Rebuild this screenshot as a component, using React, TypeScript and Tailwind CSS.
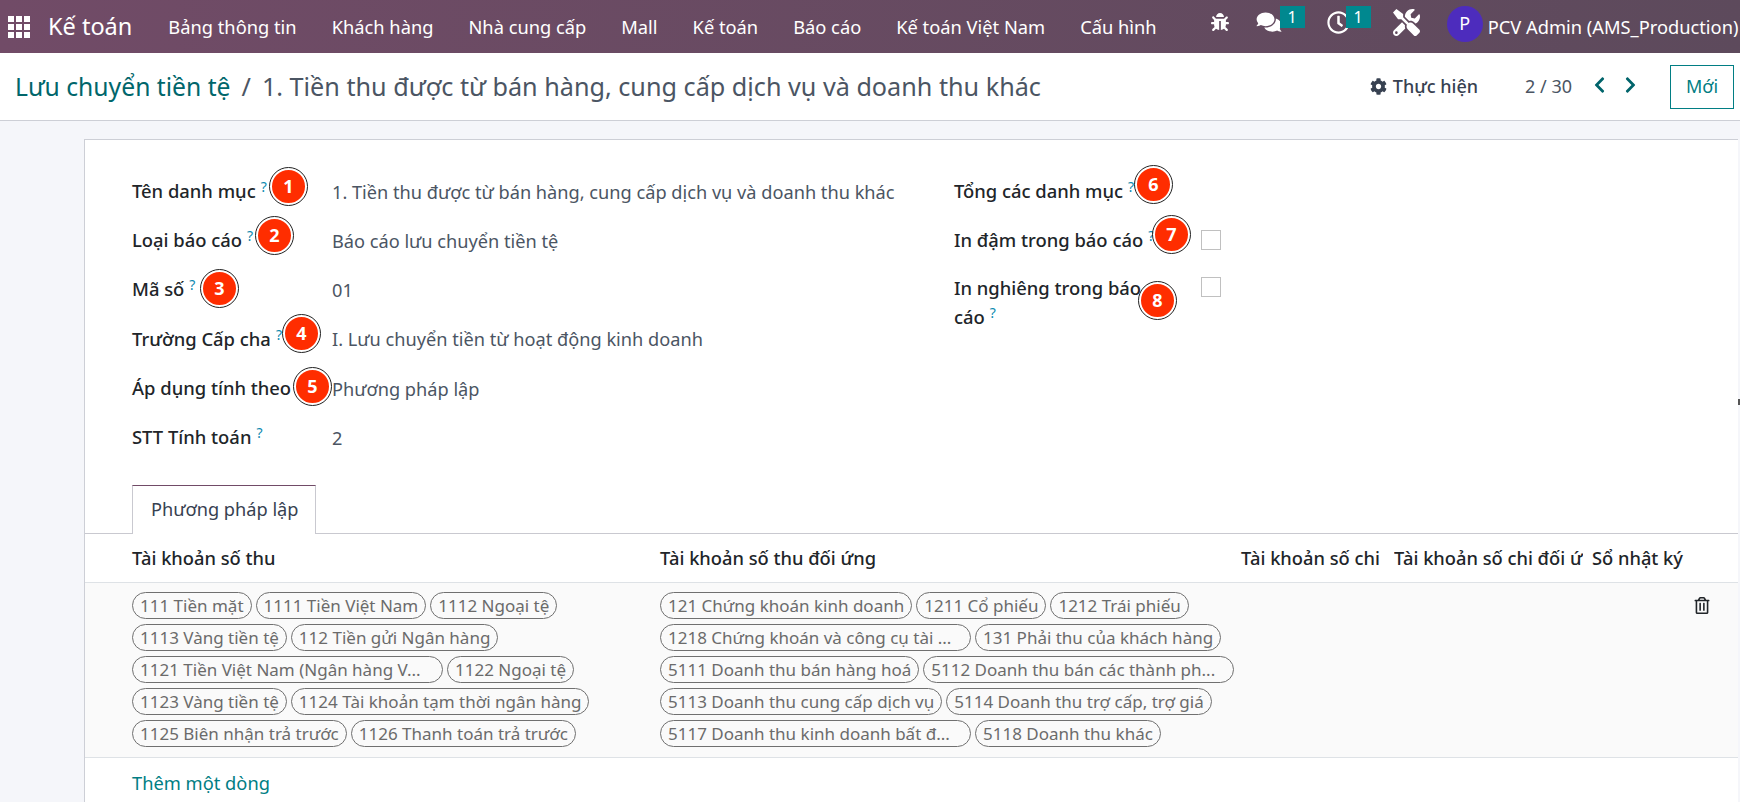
import { FaBug, FaChevronLeft, FaChevronRight, FaCog, FaComments, FaRegClock, FaRegTrashAlt, FaTools } from 'react-icons/fa';

const FONT = 'font-["Noto_Sans","Open_Sans",sans-serif]';

const NAV_ITEMS = ['Bảng thông tin', 'Khách hàng', 'Nhà cung cấp', 'Mall', 'Kế toán', 'Báo cáo', 'Kế toán Việt Nam', 'Cấu hình'];

const LEFT_TAGS = [
    ['111 Tiền mặt', '1111 Tiền Việt Nam', '1112 Ngoại tệ'],
    ['1113 Vàng tiền tệ', '112 Tiền gửi Ngân hàng'],
    ['1121 Tiền Việt Nam (Ngân hàng V...', '1122 Ngoại tệ'],
    ['1123 Vàng tiền tệ', '1124 Tài khoản tạm thời ngân hàng'],
    ['1125 Biên nhận trả trước', '1126 Thanh toán trả trước'],
];

const RIGHT_TAGS = [
    ['121 Chứng khoán kinh doanh', '1211 Cổ phiếu', '1212 Trái phiếu'],
    ['1218 Chứng khoán và công cụ tài ...', '131 Phải thu của khách hàng'],
    ['5111 Doanh thu bán hàng hoá', '5112 Doanh thu bán các thành ph...'],
    ['5113 Doanh thu cung cấp dịch vụ', '5114 Doanh thu trợ cấp, trợ giá'],
    ['5117 Doanh thu kinh doanh bất đ...', '5118 Doanh thu khác'],
];

function Marker({ n, className }: { n: number; className: string }) {
    return (
        <div
            className={`absolute w-[37px] h-[37px] rounded-full bg-[#ff2d00] border-2 border-white outline outline-[1.5px] outline-[#222] flex items-center justify-center text-white text-[18px] font-bold ${className}`}
        >
            {n}
        </div>
    );
}

function Help() {
    return <sup className="text-[#0d8ab0] text-[14px] font-normal ml-[5px] -top-[6px]">?</sup>;
}

function FieldRow({ label, value }: { label: string; value: string }) {
    return (
        <div className="flex h-[49.3px] items-center">
            <div className="w-[200px] text-[18.4px] font-medium text-[#212529] whitespace-nowrap">
                {label}
                <Help />
            </div>
            <div className="pt-[3px] text-[18.2px] text-[#4b5563] whitespace-nowrap">{value}</div>
        </div>
    );
}

function TagRows({ rows }: { rows: string[][] }) {
    return (
        <div className="flex flex-col gap-[5px]">
            {rows.map((row) => (
                <div key={row[0]} className="flex gap-[4px]">
                    {row.map((tag) => (
                        <span
                            key={tag}
                            className={`h-[27px] px-[7px] flex items-center rounded-full border-[1.5px] border-[#707070] text-[17px] text-[#6b6b6b] whitespace-nowrap ${tag.endsWith('...') ? 'w-[311px]' : ''}`}
                        >
                            {tag}
                        </span>
                    ))}
                </div>
            ))}
        </div>
    );
}

function CountBadge({ className }: { className: string }) {
    return (
        <span className={`absolute w-[25px] h-[22px] bg-[#00888f] text-[16px] flex items-center justify-center ${className}`}>
            1
        </span>
    );
}

export default function App() {
    return (
        <div className={`relative w-[1740px] h-[802px] overflow-hidden bg-[#f5f6fa] ${FONT}`}>
            <div className="h-[53px] bg-gradient-to-r from-[#714b67] to-[#5d4a5c] text-white flex items-center overflow-hidden whitespace-nowrap">
                <div className="ml-[8px] w-[22px] h-[22px] grid grid-cols-3 gap-[2px]">
                    {Array.from({ length: 9 }).map((_, i) => (
                        <span key={i} className="bg-white" />
                    ))}
                </div>
                <span className="ml-[18px] mr-[36px] text-[23.5px]">Kế toán</span>
                <div className="flex gap-[35px] text-[18.3px]">
                    {NAV_ITEMS.map((item) => (
                        <span key={item}>{item}</span>
                    ))}
                </div>
                <FaBug className="ml-[54px] -mt-[9px] w-[18px] h-[18px]" />
                <div className="relative ml-[27px] -mt-[9px] w-[26px] h-[22px]">
                    <FaComments className="w-[26px] h-[22px]" />
                    <CountBadge className="-top-[5px] left-[24px]" />
                </div>
                <div className="relative ml-[45px] -mt-[9px] w-[23px] h-[23px]">
                    <FaRegClock className="w-[23px] h-[23px]" />
                    <CountBadge className="-top-[5px] left-[19px]" />
                </div>
                <FaTools className="ml-[43px] -mt-[9px] w-[27px] h-[27px]" />
                <div className="ml-[27px] -mt-[6px] w-[36px] h-[36px] rounded-full bg-[#4d2cbd] flex items-center justify-center text-[18px]">
                    P
                </div>
                <span className="ml-[5px] text-[18.3px]">PCV Admin (AMS_Production)</span>
            </div>

            <div className="h-[68px] bg-white border-b border-[#cdcfd6] flex items-center">
                <div className="ml-[15px] text-[25.2px] text-[#4b5563] whitespace-nowrap">
                    <span className="text-[24.7px] text-[#00666b]">Lưu chuyển tiền tệ</span>
                    <span className="mx-[11px]">/</span>
                    <span>1. Tiền thu được từ bán hàng, cung cấp dịch vụ và doanh thu khác</span>
                </div>
                <FaCog className="ml-auto w-[17px] h-[17px] text-[#374151]" />
                <span className="ml-[6px] text-[18px] font-medium text-[#374151]">Thực hiện</span>
                <span className="ml-[47px] text-[18px] text-[#4b5563]">2 / 30</span>
                <FaChevronLeft className="ml-[21px] -mt-[4px] w-[13px] h-[18px] text-[#00646b]" />
                <FaChevronRight className="ml-[18px] -mt-[4px] w-[13px] h-[18px] text-[#00646b]" />
                <button className="ml-[33px] mr-[6px] w-[64px] h-[44px] border border-[#017e84] text-[#017e84] text-[18px]">
                    Mới
                </button>
            </div>

            <div className="relative ml-[84px] mr-[2px] mt-[18px] h-[663px] bg-white border-l border-t border-[#cdcfd6]">
                <div className="flex pl-[47px] pt-[26px] h-[345px]">
                    <div className="w-[822px]">
                        <FieldRow label="Tên danh mục" value="1. Tiền thu được từ bán hàng, cung cấp dịch vụ và doanh thu khác" />
                        <FieldRow label="Loại báo cáo" value="Báo cáo lưu chuyển tiền tệ" />
                        <FieldRow label="Mã số" value="01" />
                        <FieldRow label="Trường Cấp cha" value="I. Lưu chuyển tiền từ hoạt động kinh doanh" />
                        <FieldRow label="Áp dụng tính theo" value="Phương pháp lập" />
                        <FieldRow label="STT Tính toán" value="2" />
                    </div>
                    <div className="w-[300px] text-[18.4px] font-medium text-[#212529]">
                        <div className="h-[49px] flex items-center">
                            <span>
                                Tổng các danh mục
                                <Help />
                            </span>
                        </div>
                        <div className="h-[49px] flex items-center">
                            <span className="w-[247px]">
                                In đậm trong báo cáo
                                <Help />
                            </span>
                            <span className="w-[20px] h-[20px] border border-[#c0c0c0]" />
                        </div>
                        <div className="flex pt-[9px]">
                            <span className="w-[247px] pr-[50px] leading-[29px]">
                                In nghiêng trong báo cáo
                                <Help />
                            </span>
                            <span className="mt-[4px] w-[20px] h-[20px] border border-[#c0c0c0]" />
                        </div>
                    </div>
                </div>

                <div className="flex h-[49px] border-b border-[#c9c9d0] pl-[47px]">
                    <div className="w-[184px] h-[49px] px-[18px] bg-white border border-b-0 border-[#c9c9d0] border-t-[#714b67] flex items-center text-[18.2px] text-[#374151] whitespace-nowrap">
                        Phương pháp lập
                    </div>
                </div>

                <div className="flex h-[49px] border-b border-[#dee2e6] items-center text-[18.3px] font-medium text-[#212529] whitespace-nowrap">
                    <div className="pl-[47px] w-[575px]">Tài khoản số thu</div>
                    <div className="w-[581px]">Tài khoản số thu đối ứng</div>
                    <div className="w-[153px]">Tài khoản số chi</div>
                    <div className="w-[189px] mr-[9px] overflow-hidden">Tài khoản số chi đối ứng</div>
                    <div>Sổ nhật ký</div>
                </div>

                <div className="relative flex h-[175px] border-b border-[#dee2e6] bg-[#fafafa] pt-[9px]">
                    <div className="pl-[47px] w-[575px]">
                        <TagRows rows={LEFT_TAGS} />
                    </div>
                    <TagRows rows={RIGHT_TAGS} />
                    <FaRegTrashAlt className="absolute left-[1609px] top-[14px] w-[16px] h-[17px] text-[#212529]" />
                </div>

                <div className="h-[49px] pl-[47px] flex items-center text-[18.3px] text-[#017e84]">Thêm một dòng</div>
            </div>

            <div className="absolute right-0 top-[399px] w-[2px] h-[6px] bg-[#555]" />

            <Marker n={1} className="left-[270px] top-[168px]" />
            <Marker n={2} className="left-[256px] top-[217px]" />
            <Marker n={3} className="left-[201px] top-[270px]" />
            <Marker n={4} className="left-[283px] top-[315px]" />
            <Marker n={5} className="left-[294px] top-[368px]" />
            <Marker n={6} className="left-[1135px] top-[166px]" />
            <Marker n={7} className="left-[1153px] top-[216px]" />
            <Marker n={8} className="left-[1139px] top-[282px]" />
        </div>
    );
}
